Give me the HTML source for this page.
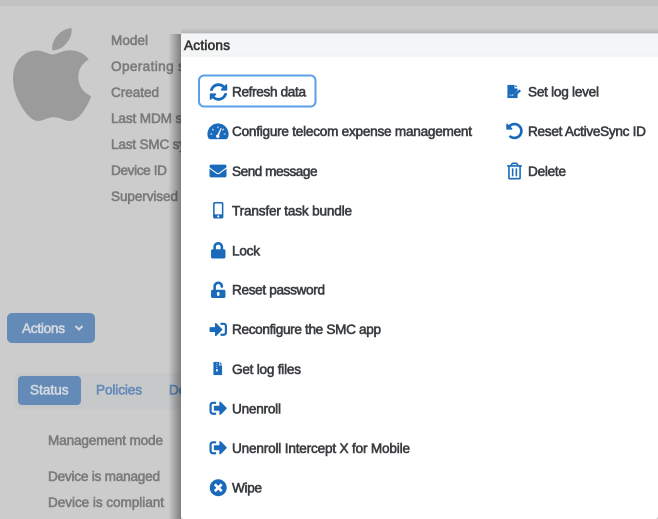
<!DOCTYPE html>
<html lang="en"><head><meta charset="utf-8"><title>Actions</title>
<style>
html,body{margin:0;padding:0;width:658px;height:519px;overflow:hidden;background:#ccc}
svg{display:block}
text{font-family:"Liberation Sans",Arial,sans-serif;font-size:13.6px;stroke-width:.6px}
.m text{fill:#3a3d40;stroke:#3a3d40}
.b text{fill:#7b7b7b;stroke:#7b7b7b}
.i{fill:#1a6abb;stroke:#1a6abb;stroke-width:.15px}
</style></head><body>
<svg width="658" height="519" viewBox="0 0 658 519" xmlns="http://www.w3.org/2000/svg">
<defs>
<linearGradient id="sh" x1="0" x2="1" y1="0" y2="0"><stop offset="0" stop-color="#000" stop-opacity="0"/><stop offset="1" stop-color="#000" stop-opacity=".38"/></linearGradient>
<linearGradient id="st" x1="0" x2="0" y1="0" y2="1"><stop offset="0" stop-color="#000" stop-opacity="0"/><stop offset="1" stop-color="#000" stop-opacity=".14"/></linearGradient>
</defs>
<rect width="658" height="519" fill="#cccccc"/>
<rect width="658" height="6" fill="#c3c3c3"/>
<svg x="12.2" y="21.4" width="79.7" height="106.2" viewBox="0 0 384 512"><path fill="#9b9b9c" d="M318.7 268.7c-.2-36.7 16.4-64.4 50-84.8-18.8-26.9-47.2-41.7-84.7-44.6-35.5-2.8-74.3 20.7-88.5 20.7-15 0-49.4-19.7-76.4-19.7C63.3 141.2 4 184.8 4 273.5q0 39.3 14.4 81.2c12.8 36.7 59 126.7 107.2 125.2 25.2-.6 43-17.9 75.8-17.9 31.8 0 48.3 17.9 76.4 17.9 48.6-.7 90.4-82.5 102.6-119.3-65.2-30.7-61.7-90-61.7-91.9zm-56.6-164.2c27.3-32.4 24.8-61.9 24-72.5-24.1 1.4-52 16.4-67.9 34.9-17.5 19.8-27.8 44.3-25.6 71.9 26.1 2 49.9-11.4 69.5-34.3z"/></svg>
<g class="b">
<text x="111" y="45" textLength="37">Model</text>
<text x="111" y="71" textLength="112">Operating system</text>
<text x="111" y="97" textLength="48">Created</text>
<text x="111" y="123" textLength="92">Last MDM sync</text>
<text x="111" y="149" textLength="89">Last SMC sync</text>
<text x="111" y="175" textLength="56">Device ID</text>
<text x="111" y="201" textLength="67">Supervised</text>
<text x="48" y="445" textLength="115">Management mode</text>
<text x="48" y="481" textLength="112">Device is managed</text>
<text x="48" y="507" textLength="116">Device is compliant</text>
</g>
<rect x="7" y="313" width="88" height="30" rx="5" fill="#648ab8"/>
<text x="22" y="333" textLength="43" fill="#d3d8df" stroke="#d3d8df">Actions</text>
<path d="M75.5 326l3.5 3.5 3.5-3.5" fill="none" stroke="#d3d8df" stroke-width="2"/>
<rect x="15" y="373" width="170" height="36" fill="#c6c8ca"/>
<rect x="18" y="376" width="63" height="29" rx="4" fill="#648ab8"/>
<text x="30" y="394.5" textLength="38.5" fill="#d3d8df" stroke="#d3d8df">Status</text>
<text x="96" y="394.5" textLength="46" fill="#648ab8" stroke="#648ab8">Policies</text>
<text x="169" y="394.5" textLength="40" fill="#648ab8" stroke="#648ab8">Details</text>

<rect x="168" y="34" width="13" height="485" fill="url(#sh)"/>
<rect x="181" y="28" width="477" height="6" fill="url(#st)"/>
<rect x="181" y="33" width="477" height="486" rx="3" fill="#ffffff"/>
<path d="M181 56V37a4 4 0 0 1 4-4H658V56z" fill="#f4f5f7"/>
<rect x="181" y="33" width="477" height="1" fill="#dcdee1"/>
<rect x="181" y="55.5" width="477" height="1" fill="#eeeeee"/>
<text x="184" y="50" textLength="46" fill="#333" stroke="#333">Actions</text>

<rect x="199" y="75.5" width="116.5" height="31" rx="5" fill="#fff" stroke="#5b9fe6" stroke-width="2"/>

<g class="m">
<text x="232" y="96.5" textLength="74">Refresh data</text>
<text x="232" y="136" textLength="240">Configure telecom expense management</text>
<text x="232" y="176" textLength="85.5">Send message</text>
<text x="232" y="215.5" textLength="120">Transfer task bundle</text>
<text x="232" y="255.5" textLength="28">Lock</text>
<text x="232" y="294.5" textLength="93">Reset password</text>
<text x="232" y="334" textLength="149">Reconfigure the SMC app</text>
<text x="232" y="374" textLength="69">Get log files</text>
<text x="232" y="413.5" textLength="49">Unenroll</text>
<text x="232" y="453" textLength="178">Unenroll Intercept X for Mobile</text>
<text x="232" y="492.5" textLength="30">Wipe</text>
<text x="528" y="96.5" textLength="71">Set log level</text>
<text x="528" y="136" textLength="118">Reset ActiveSync ID</text>
<text x="528" y="176" textLength="38">Delete</text>
</g>

<g class="i">
<svg x="209.5" y="83" width="18" height="18" viewBox="0 0 512 512"><path d="M370.72 133.28C339.458 104.008 298.888 87.962 255.848 88c-77.458.068-144.328 53.178-162.791 126.85-1.344 5.363-6.122 9.15-11.651 9.15H24.103c-7.498 0-13.194-6.807-11.807-14.176C33.933 94.924 134.813 8 256 8c66.448 0 126.791 26.136 171.315 68.685L463.03 40.97C478.149 25.851 504 36.559 504 57.941V192c0 13.255-10.745 24-24 24H345.941c-21.382 0-32.09-25.851-16.971-40.971l41.75-41.749zM32 296h134.059c21.382 0 32.09 25.851 16.971 40.971l-41.75 41.75c31.262 29.273 71.835 45.319 114.876 45.28 77.418-.07 144.315-53.144 162.787-126.849 1.344-5.363 6.122-9.15 11.651-9.15h57.304c7.498 0 13.194 6.807 11.807 14.176C478.067 417.076 377.187 504 256 504c-66.448 0-126.791-26.136-171.315-68.685L48.97 471.03C33.851 486.149 8 475.441 8 454.059V320c0-13.255 10.745-24 24-24z"/></svg>
<path fill-rule="evenodd" d="M218 123.5a10.5 10.5 0 0 1 10.5 10.5c0 1.800-.4 3.400-1.200 4.500-.3.400-.8.600-1.300.6h-16c-.5 0-1-.2-1.300-.6-.8-1.100-1.200-2.700-1.200-4.500a10.500 10.500 0 0 1 10.500-10.500zM217.500 126.200v2.200h1v-2.200zM212.500 128.500l-.7.7 1.500 1.500.7-.7zM223.500 128.500l-1.500 1.500.7.7 1.500-1.500zM210.200 133.500v1h2.200v-1zM223.600 133.500v1h2.200v-1zM220.800 127.800l-3.400 6.700a1.800 1.800 0 1 0 1.700.6l2.700-6.900z"/>
<svg x="209.5" y="162.5" width="17" height="17" viewBox="0 0 512 512"><path d="M502.3 190.8c3.900-3.100 9.700-.2 9.700 4.700V400c0 26.500-21.500 48-48 48H48c-26.500 0-48-21.500-48-48V195.600c0-5 5.700-7.800 9.700-4.700 22.400 17.400 52.100 39.500 154.100 113.600 21.100 15.400 56.700 47.800 92.200 47.600 35.700.3 72-32.800 92.300-47.600 102-74.100 131.600-96.300 154-113.700zM256 320c23.200.4 56.600-29.200 73.400-41.400 132.700-96.300 142.800-104.700 173.400-128.700 5.800-4.500 9.200-11.500 9.200-18.900v-19c0-26.500-21.500-48-48-48H48C21.500 64 0 85.500 0 112v19c0 7.400 3.400 14.300 9.200 18.900 30.600 23.900 40.700 32.400 173.400 128.700 16.800 12.200 50.200 41.800 73.400 41.400z"/></svg>
<svg x="213" y="202" width="10.5" height="16.5" viewBox="0 0 320 512"><path d="M272 0H48C21.500 0 0 21.500 0 48v416c0 26.500 21.500 48 48 48h224c26.500 0 48-21.500 48-48V48c0-26.500-21.500-48-48-48zM160 480c-17.700 0-32-14.300-32-32s14.300-32 32-32 32 14.300 32 32-14.300 32-32 32zm112-108c0 6.600-5.400 12-12 12H60c-6.600 0-12-5.400-12-12V60c0-6.600 5.400-12 12-12h200c6.600 0 12 5.400 12 12v312z"/></svg>
<svg x="211" y="242" width="14.5" height="16.5" viewBox="0 0 448 512"><path d="M400 224h-24v-72C376 68.200 307.800 0 224 0S72 68.200 72 152v72H48c-26.500 0-48 21.500-48 48v192c0 26.500 21.500 48 48 48h352c26.500 0 48-21.500 48-48V272c0-26.500-21.500-48-48-48zm-104 0H152v-72c0-39.700 32.300-72 72-72s72 32.300 72 72v72z"/></svg>
<svg x="211" y="281.5" width="14.5" height="16.5" viewBox="0 0 448 512"><path d="M400 256H152V152.900c0-39.600 31.700-72.500 71.300-72.900 40-.4 72.700 32.100 72.700 72v16c0 13.300 10.700 24 24 24h32c13.300 0 24-10.700 24-24v-16C376 68 307.500-.3 223.500 0 139.500.3 72 69.500 72 153.500V256H48c-26.500 0-48 21.500-48 48v160c0 26.500 21.500 48 48 48h352c26.500 0 48-21.500 48-48V304c0-26.500-21.500-48-48-48zM264 408c0 22.100-17.900 40-40 40s-40-17.900-40-40v-48c0-22.100 17.900-40 40-40s40 17.900 40 40v48z"/></svg>
<svg x="209.5" y="320.5" width="17.5" height="17.5" viewBox="0 0 512 512"><path d="M416 448h-84c-6.600 0-12-5.400-12-12v-40c0-6.600 5.400-12 12-12h84c17.700 0 32-14.300 32-32V160c0-17.700-14.300-32-32-32h-84c-6.600 0-12-5.400-12-12V76c0-6.600 5.400-12 12-12h84c53 0 96 43 96 96v192c0 53-43 96-96 96zm-47-201L201 79c-15-15-41-4.500-41 17v96H24c-13.300 0-24 10.700-24 24v96c0 13.300 10.700 24 24 24h136v96c0 21.500 26 32 41 17l168-168c9.300-9.400 9.300-24.600 0-34z"/></svg>
<path fill-rule="evenodd" d="M213.500 362H219v3.500h3V375H213.500zM216.400 363v1h1v-1zM216.400 365v1h1v-1zM216.400 367v1h1v-1zM216 369v2.500h1.800V369zM219.800 362l2.200 2.500h-2.200z"/>
<svg x="209.5" y="399.5" width="17.5" height="17.5" viewBox="0 0 512 512"><path d="M497 273L329 441c-15 15-41 4.500-41-17v-96H152c-13.300 0-24-10.700-24-24v-96c0-13.300 10.700-24 24-24h136V88c0-21.400 25.900-32 41-17l168 168c9.300 9.400 9.300 24.600 0 34zM192 436v-40c0-6.600-5.400-12-12-12H96c-17.700 0-32-14.300-32-32V160c0-17.700 14.300-32 32-32h84c6.600 0 12-5.400 12-12V76c0-6.600-5.400-12-12-12H96c-53 0-96 43-96 96v192c0 53 43 96 96 96h84c6.600 0 12-5.400 12-12z"/></svg>
<svg x="209.5" y="439" width="17.5" height="17.5" viewBox="0 0 512 512"><path d="M497 273L329 441c-15 15-41 4.500-41-17v-96H152c-13.300 0-24-10.700-24-24v-96c0-13.300 10.700-24 24-24h136V88c0-21.400 25.900-32 41-17l168 168c9.300 9.400 9.300 24.600 0 34zM192 436v-40c0-6.600-5.400-12-12-12H96c-17.700 0-32-14.300-32-32V160c0-17.700 14.300-32 32-32h84c6.600 0 12-5.400 12-12V76c0-6.600-5.400-12-12-12H96c-53 0-96 43-96 96v192c0 53 43 96 96 96h84c6.600 0 12-5.400 12-12z"/></svg>
<svg x="209.5" y="479" width="17.5" height="17.5" viewBox="0 0 512 512"><path d="M256 8C119 8 8 119 8 256s111 248 248 248 248-111 248-248S393 8 256 8zm121.600 313.100c4.700 4.700 4.700 12.300 0 17L338 377.600c-4.700 4.700-12.300 4.700-17 0L256 312l-65.100 65.600c-4.700 4.700-12.300 4.700-17 0L134.400 338c-4.700-4.700-4.700-12.300 0-17l65.600-65-65.600-65.100c-4.700-4.700-4.700-12.300 0-17l39.600-39.600c4.700-4.700 12.300-4.700 17 0l65 65.700 65.100-65.600c4.700-4.700 12.300-4.700 17 0l39.600 39.600c4.700 4.700 4.700 12.300 0 17L312 256l65.600 65.100z"/></svg>
<path d="M507.500 85H514.500V88.500H517.500V90.500L513 95 512.500 94 511 95.500 510.500 94.500H509.500V95.500L512 95.500 514 95.500 517.500 93V98H507.500zM515.500 85l2 2h-2zM519.500 89.500l1.500 1.500-5.500 5-2-.2.200-1.500z"/>
<svg x="506" y="122.500" width="17" height="17" viewBox="0 0 512 512"><path d="M255.545 8c-66.269.119-126.438 26.233-170.860 68.685L48.971 40.971C33.851 25.851 8 36.559 8 57.941V192c0 13.255 10.745 24 24 24h134.059c21.382 0 32.090-25.851 16.971-40.971l-41.750-41.750c30.864-28.899 70.801-44.907 113.230-45.273 92.398-.798 170.283 73.977 169.484 169.442C423.236 348.009 349.816 424 256 424c-41.127 0-79.997-14.678-110.630-41.556-4.743-4.161-11.906-3.908-16.368.553L89.340 422.659c-4.872 4.872-4.631 12.815.482 17.433C133.798 479.813 192.074 504 256 504c136.966 0 247.999-111.033 248-247.998C504.001 119.193 392.354 7.755 255.545 8z"/></svg>
<svg x="507" y="162.500" width="15" height="17" viewBox="0 0 448 512"><path d="M268 416h24a12 12 0 0 0 12-12V188a12 12 0 0 0-12-12h-24a12 12 0 0 0-12 12v216a12 12 0 0 0 12 12zM432 80h-82.410l-34-56.700A48 48 0 0 0 274.410 0H173.590a48 48 0 0 0-41.160 23.300L98.410 80H16A16 16 0 0 0 0 96v16a16 16 0 0 0 16 16h16v336a48 48 0 0 0 48 48h288a48 48 0 0 0 48-48V128h16a16 16 0 0 0 16-16V96a16 16 0 0 0-16-16zM171.840 50.910A6 6 0 0 1 177 48h94a6 6 0 0 1 5.150 2.910L293.610 80H154.390zM368 464H80V128h288zm-212-48h24a12 12 0 0 0 12-12V188a12 12 0 0 0-12-12h-24a12 12 0 0 0-12 12v216a12 12 0 0 0 12 12z"/></svg>
</g>
</svg>
</body></html>
